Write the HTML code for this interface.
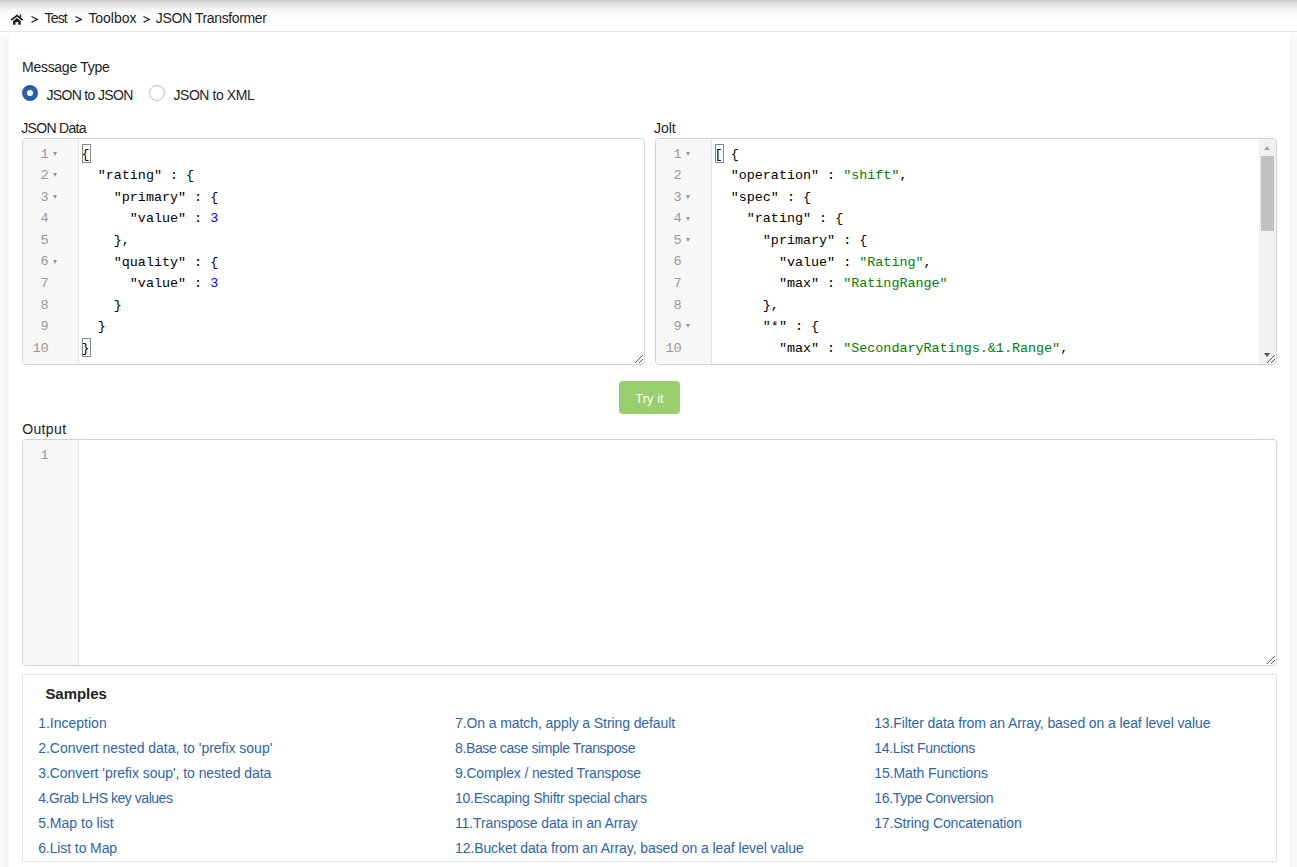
<!DOCTYPE html>
<html><head><meta charset="utf-8">
<style>
*{box-sizing:border-box;margin:0;padding:0}
html,body{width:1297px;height:867px;overflow:hidden;background:#fff}
body{font-family:"Liberation Sans",sans-serif;font-size:14px;color:#333;position:relative}
.abs{position:absolute}
#topshade{left:0;top:0;width:1297px;height:22px;background:linear-gradient(#c8c8c8 0px,#e2e2e2 4px,#f3f3f3 9px,#fbfbfb 14px,#fff 21px)}
#bcline{left:0;top:31px;width:1297px;height:1px;background:#e3e6ec}
#lshade{left:0;top:32px;width:9px;height:835px;background:linear-gradient(rgba(255,255,255,.8),rgba(255,255,255,0) 10px),linear-gradient(90deg,#f9f9f9,#f3f4f4)}
#rshade{left:1290px;top:32px;width:7px;height:835px;background:linear-gradient(rgba(255,255,255,.8),rgba(255,255,255,0) 10px),linear-gradient(90deg,#f3f4f4,#f9f9f9)}
.txt{white-space:pre;line-height:14px}
.bc{color:#222}
.lbl{color:#222}
.radio{width:16px;height:16px;border-radius:50%;border:1px solid #b9bfc7;background:#fff}
.radio.on{border:5px solid #2760a8;background:#fff}
.editor{position:absolute;border:1px solid #ccd3dc;border-radius:4px;background:#fff;overflow:hidden}
.gutter{position:absolute;left:0;top:0;bottom:0;width:56px;background:#f7f7f7;border-right:1px solid #e2e2e2}
.code{font-family:"Liberation Mono",monospace;font-size:13.4px;white-space:pre;color:#000}
.ln{position:absolute;height:21.57px;line-height:21.57px}
.gn{font-family:"Liberation Mono",monospace;font-size:13.6px;color:#999;text-align:right;width:26px;left:-0.3px;margin-top:0.2px}
.fold{position:absolute;left:30.4px;width:0;height:0;border-left:2.8px solid transparent;border-right:2.8px solid transparent;border-top:4.2px solid #959595;margin-top:-0.8px}
.s{color:#008000}
.n{color:#0000ff}
.bbox{position:absolute;width:9.2px;height:18.6px;border:1px solid #888}
.rs{position:absolute;right:1px;bottom:1px}
.sb{position:absolute;right:0;top:0;width:17px;bottom:0;background:#f1f1f1}
.sbup{position:absolute;left:5px;top:7px;width:0;height:0;border-left:3.6px solid transparent;border-right:3.6px solid transparent;border-bottom:4px solid #a3a3a3}
.sbdn{position:absolute;left:4.6px;bottom:7px;width:0;height:0;border-left:3.8px solid transparent;border-right:3.8px solid transparent;border-top:4px solid #505050}
.sbth{position:absolute;left:2px;top:17px;width:13px;height:75px;background:#c1c1c1}
.btn{background:#98ce6c;border-radius:4px;color:#fff;font-size:13px;text-align:center;line-height:35px}
.samples{border:1px solid #e0e4e9}
.stitle{font-weight:bold;font-size:15px;color:#222;line-height:15px}
a.lk{position:absolute;color:#2f65a6;text-decoration:none;white-space:pre;line-height:14px}
</style></head><body>
<div id="topshade" class="abs"></div>
<div id="bcline" class="abs"></div>
<div id="lshade" class="abs"></div>
<div id="rshade" class="abs"></div>
<svg class="abs" style="left:8px;top:12px" width="18" height="15" viewBox="8 12 18 15">
<path d="M11.1 20.1 L16.9 15.6 L22.7 20.1" stroke="#1a1a1a" stroke-width="1.6" fill="none"/>
<rect x="19.8" y="14.5" width="1.4" height="3.2" fill="#1a1a1a"/>
<path d="M13.1 20.9 L16.9 18.1 L20.7 20.9 V24.8 H18.3 V22 H15.5 V24.8 H13.1 Z" fill="#1a1a1a"/>
</svg>
<svg class="abs" style="left:29.9px;top:15px" width="10" height="9" viewBox="0 0 10 9"><path d="M1.5 1.5 L7.4 4.4 L1.5 7.3" stroke="#222" stroke-width="1.2" fill="none"/></svg>
<svg class="abs" style="left:73.5px;top:15px" width="10" height="9" viewBox="0 0 10 9"><path d="M1.5 1.5 L7.4 4.4 L1.5 7.3" stroke="#222" stroke-width="1.2" fill="none"/></svg>
<svg class="abs" style="left:141.9px;top:15px" width="10" height="9" viewBox="0 0 10 9"><path d="M1.5 1.5 L7.4 4.4 L1.5 7.3" stroke="#222" stroke-width="1.2" fill="none"/></svg>
<div id="bc1" class="abs txt bc" style="left:44.60px;top:11px;letter-spacing:-0.867px">Test</div>
<div id="bc2" class="abs txt bc" style="left:88.40px;top:11px;letter-spacing:-0.033px">Toolbox</div>
<div id="bc3" class="abs txt bc" style="left:155.80px;top:11px;letter-spacing:-0.373px">JSON Transformer</div>
<div id="mt" class="abs txt lbl" style="left:22.00px;top:60px;letter-spacing:-0.273px">Message Type</div>
<div id="r1" class="abs txt lbl" style="left:46.40px;top:88px;letter-spacing:-0.655px">JSON to JSON</div>
<div id="r2" class="abs txt lbl" style="left:173.40px;top:88px;letter-spacing:-0.420px">JSON to XML</div>
<div id="jd" class="abs txt lbl" style="left:21.20px;top:121px;letter-spacing:-0.675px">JSON Data</div>
<div id="jo" class="abs txt lbl" style="left:654.00px;top:121px;letter-spacing:-0.067px">Jolt</div>
<div id="out" class="abs txt lbl" style="left:22.20px;top:422px;letter-spacing:0.360px">Output</div>
<div id="smp" class="abs txt stitle" style="left:45.40px;top:686px;letter-spacing:-0.033px">Samples</div>
<a id="l00" class="abs txt lk" style="left:38.20px;top:715.5px;letter-spacing:0.000px">1.Inception</a>
<a id="l01" class="abs txt lk" style="left:38.20px;top:740.5px;letter-spacing:-0.021px">2.Convert nested data, to 'prefix soup'</a>
<a id="l02" class="abs txt lk" style="left:38.20px;top:765.5px;letter-spacing:-0.047px">3.Convert 'prefix soup', to nested data</a>
<a id="l03" class="abs txt lk" style="left:38.20px;top:790.5px;letter-spacing:-0.460px">4.Grab LHS key values</a>
<a id="l04" class="abs txt lk" style="left:38.20px;top:815.5px;letter-spacing:0.000px">5.Map to list</a>
<a id="l05" class="abs txt lk" style="left:38.20px;top:840.5px;letter-spacing:-0.100px">6.List to Map</a>
<a id="l10" class="abs txt lk" style="left:455.00px;top:715.5px;letter-spacing:-0.091px">7.On a match, apply a String default</a>
<a id="l11" class="abs txt lk" style="left:455.00px;top:740.5px;letter-spacing:-0.378px">8.Base case simple Transpose</a>
<a id="l12" class="abs txt lk" style="left:455.00px;top:765.5px;letter-spacing:-0.141px">9.Complex / nested Transpose</a>
<a id="l13" class="abs txt lk" style="left:455.00px;top:790.5px;letter-spacing:-0.232px">10.Escaping Shiftr special chars</a>
<a id="l14" class="abs txt lk" style="left:455.00px;top:815.5px;letter-spacing:-0.129px">11.Transpose data in an Array</a>
<a id="l15" class="abs txt lk" style="left:455.00px;top:840.5px;letter-spacing:-0.093px">12.Bucket data from an Array, based on a leaf level value</a>
<a id="l20" class="abs txt lk" style="left:874.20px;top:715.5px;letter-spacing:-0.104px">13.Filter data from an Array, based on a leaf level value</a>
<a id="l21" class="abs txt lk" style="left:874.20px;top:740.5px;letter-spacing:-0.300px">14.List Functions</a>
<a id="l22" class="abs txt lk" style="left:874.20px;top:765.5px;letter-spacing:-0.087px">15.Math Functions</a>
<a id="l23" class="abs txt lk" style="left:874.20px;top:790.5px;letter-spacing:-0.306px">16.Type Conversion</a>
<a id="l24" class="abs txt lk" style="left:874.20px;top:815.5px;letter-spacing:-0.118px">17.String Concatenation</a>
<div class="abs radio on" style="left:22px;top:85px"></div>
<div class="abs radio" style="left:149px;top:85px"></div>
<div class="editor" style="left:22px;top:138px;width:623px;height:227px">
<div class="gutter"></div>
<div class="ln gn" style="top:4.40px">1</div>
<div class="fold" style="top:13.60px"></div>
<div class="ln gn" style="top:25.97px">2</div>
<div class="fold" style="top:35.17px"></div>
<div class="ln gn" style="top:47.54px">3</div>
<div class="fold" style="top:56.74px"></div>
<div class="ln gn" style="top:69.11px">4</div>
<div class="ln gn" style="top:90.68px">5</div>
<div class="ln gn" style="top:112.25px">6</div>
<div class="fold" style="top:121.45px"></div>
<div class="ln gn" style="top:133.82px">7</div>
<div class="ln gn" style="top:155.39px">8</div>
<div class="ln gn" style="top:176.96px">9</div>
<div class="ln gn" style="top:198.53px">10</div>
<div class="ln code" style="top:4.70px;left:58.6px">{</div>
<div class="ln code" style="top:26.27px;left:58.6px">  &quot;rating&quot; : {</div>
<div class="ln code" style="top:47.84px;left:58.6px">    &quot;primary&quot; : {</div>
<div class="ln code" style="top:69.41px;left:58.6px">      &quot;value&quot; : <span class="n">3</span></div>
<div class="ln code" style="top:90.98px;left:58.6px">    },</div>
<div class="ln code" style="top:112.55px;left:58.6px">    &quot;quality&quot; : {</div>
<div class="ln code" style="top:134.12px;left:58.6px">      &quot;value&quot; : <span class="n">3</span></div>
<div class="ln code" style="top:155.69px;left:58.6px">    }</div>
<div class="ln code" style="top:177.26px;left:58.6px">  }</div>
<div class="ln code" style="top:198.83px;left:58.6px">}</div>
<div class="bbox" style="left:59.2px;top:5.2px"></div>
<div class="bbox" style="left:59.2px;top:199.3px"></div>
<svg class="rs" width="10" height="10" viewBox="0 0 10 10"><path d="M2.2 9.7 L9.8 2.1 M6.3 9.7 L9.8 6.2" stroke="#444" stroke-width="0.95" stroke-linecap="round" stroke-dasharray="0.7 0.7" fill="none"/></svg>
</div>
<div class="editor" style="left:655px;top:138px;width:622px;height:227px">
<div class="gutter"></div>
<div class="ln gn" style="top:4.40px">1</div>
<div class="fold" style="top:13.60px"></div>
<div class="ln gn" style="top:25.97px">2</div>
<div class="ln gn" style="top:47.54px">3</div>
<div class="fold" style="top:56.74px"></div>
<div class="ln gn" style="top:69.11px">4</div>
<div class="fold" style="top:78.31px"></div>
<div class="ln gn" style="top:90.68px">5</div>
<div class="fold" style="top:99.88px"></div>
<div class="ln gn" style="top:112.25px">6</div>
<div class="ln gn" style="top:133.82px">7</div>
<div class="ln gn" style="top:155.39px">8</div>
<div class="ln gn" style="top:176.96px">9</div>
<div class="fold" style="top:186.16px"></div>
<div class="ln gn" style="top:198.53px">10</div>
<div class="ln code" style="top:4.70px;left:58.6px">[ {</div>
<div class="ln code" style="top:26.27px;left:58.6px">  &quot;operation&quot; : <span class="s">&quot;shift&quot;</span>,</div>
<div class="ln code" style="top:47.84px;left:58.6px">  &quot;spec&quot; : {</div>
<div class="ln code" style="top:69.41px;left:58.6px">    &quot;rating&quot; : {</div>
<div class="ln code" style="top:90.98px;left:58.6px">      &quot;primary&quot; : {</div>
<div class="ln code" style="top:112.55px;left:58.6px">        &quot;value&quot; : <span class="s">&quot;Rating&quot;</span>,</div>
<div class="ln code" style="top:134.12px;left:58.6px">        &quot;max&quot; : <span class="s">&quot;RatingRange&quot;</span></div>
<div class="ln code" style="top:155.69px;left:58.6px">      },</div>
<div class="ln code" style="top:177.26px;left:58.6px">      &quot;*&quot; : {</div>
<div class="ln code" style="top:198.83px;left:58.6px">        &quot;max&quot; : <span class="s">&quot;SecondaryRatings.&amp;1.Range&quot;</span>,</div>
<div class="bbox" style="left:59.1px;top:5.2px"></div>
<div class="sb"><div class="sbup"></div><div class="sbth"></div><div class="sbdn"></div></div>
<svg class="rs" width="10" height="10" viewBox="0 0 10 10"><path d="M2.2 9.7 L9.8 2.1 M6.3 9.7 L9.8 6.2" stroke="#444" stroke-width="0.95" stroke-linecap="round" stroke-dasharray="0.7 0.7" fill="none"/></svg>
</div>
<div class="abs btn" style="left:619px;top:381px;width:61px;height:33px"><span>Try it</span></div>
<div class="editor" style="left:22px;top:439px;width:1255px;height:227px">
<div class="gutter"></div>
<div class="ln gn" style="top:4.40px">1</div>
<svg class="rs" width="10" height="10" viewBox="0 0 10 10"><path d="M2.2 9.7 L9.8 2.1 M6.3 9.7 L9.8 6.2" stroke="#444" stroke-width="0.95" stroke-linecap="round" stroke-dasharray="0.7 0.7" fill="none"/></svg>
</div>
<div class="abs samples" style="left:22px;top:674px;width:1255px;height:188px"></div>
</body></html>
